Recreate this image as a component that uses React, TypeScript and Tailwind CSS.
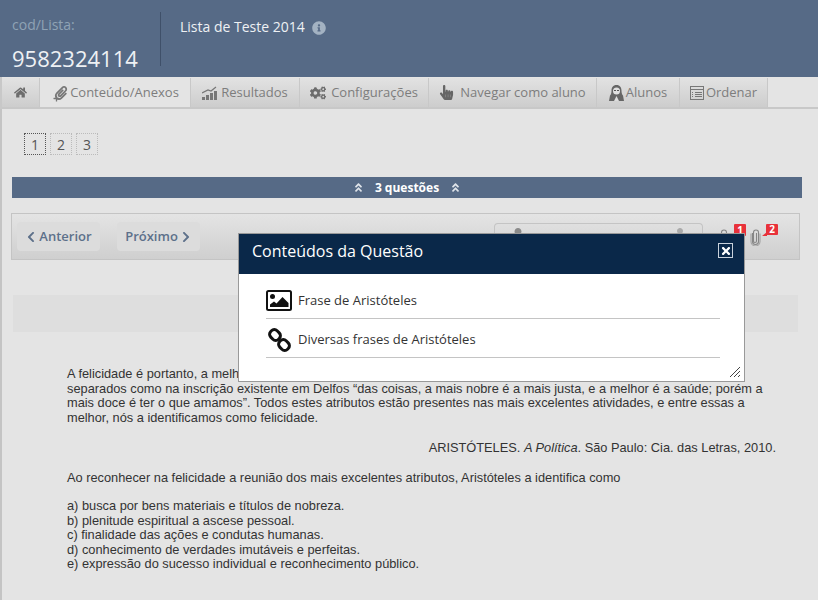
import { FaHome, FaPaperclip, FaCogs, FaHandPointer, FaChevronLeft, FaChevronRight, FaAngleDoubleUp, FaInfoCircle, FaPlus, FaTimes, FaUser } from 'react-icons/fa';

function Tab({ w, active, children }: { w: string; active?: boolean; children: React.ReactNode }) {
  return (
    <div className={`${w} h-[29px] flex items-center justify-center gap-[2px] border-r border-[#c8c8c8] text-[13px] text-[#7d7d7d] ${active ? 'bg-[#e4e4e4]' : 'bg-gradient-to-b from-[#e2e2e2] to-[#cdcdcd]'}`}>
      {children}
    </div>
  );
}

function Pager({ n, active }: { n: number; active?: boolean }) {
  return (
    <div className={`w-[22px] h-[22px] flex items-center justify-center text-[14px] text-[#555] border border-dotted ${active ? 'border-[#555]' : 'border-[#bbb]'}`}>
      {n}
    </div>
  );
}

function ChartIcon() {
  return (
    <svg width="17" height="14" viewBox="0 0 17 14" fill="#777">
      <rect x="0" y="11" width="3" height="3" />
      <rect x="4" y="9" width="3" height="5" />
      <rect x="8" y="7" width="3" height="7" />
      <rect x="12" y="5" width="3" height="9" />
      <path d="M0 7 6 4 9 5 14 1" fill="none" stroke="#777" strokeWidth="1.2" />
    </svg>
  );
}

function StudentIcon() {
  return (
    <svg width="15" height="16" viewBox="0 0 15 16">
      <path d="M7.5 0C4 0 2.5 2.500 2.500 5.500c0 2.500-.5 4-1.500 5L0 16h15l-1-5.500c-1-1-1.500-2.500-1.500-5C12.500 2.500 11 0 7.500 0z" fill="#666" />
      <ellipse cx="7.500" cy="6" rx="3.500" ry="3.500" fill="#e0e0e0" />
      <rect x="5" y="5" width="2" height="1" fill="#555" />
      <rect x="8" y="5" width="2" height="1" fill="#555" />
      <path d="M5 16 7.500 11 10 16z" fill="#dcdcdc" />
    </svg>
  );
}

function OrderIcon() {
  return (
    <svg width="14" height="14" viewBox="0 0 14 14" fill="none" stroke="#777" shapeRendering="crispEdges">
      <rect x="0.500" y="0.500" width="13" height="13" />
      <path d="M1 3.500H13M2 6.500H3M5 6.500H12M2 8.500H3M5 8.500H12M2 10.500H3M5 10.500H12" />
    </svg>
  );
}

function ClipIcon() {
  return (
    <svg width="11" height="17" viewBox="0 0 11 17" fill="none" stroke="#858585" strokeWidth="1.100">
      <path d="M2.500 4v8.500a3 3 0 0 0 6 0V3.500a2.500 2.500 0 0 0-5 0v8.500a1.500 1.500 0 0 0 3 0V4" />
      <path d="M1 4.500v8a4.500 4.500 0 0 0 9 0v-8" stroke="#a0a0a0" />
    </svg>
  );
}

function ImageIcon() {
  return (
    <svg width="26" height="21" viewBox="0 0 26 21">
      <rect x="1" y="1" width="24" height="19" rx="1.500" fill="#fff" stroke="#111" strokeWidth="2" />
      <circle cx="6.500" cy="6.500" r="2.500" fill="#111" />
      <path d="M4 17v-2.500l4-3 2.500 2 6-6.500 6 6v4z" fill="#111" />
    </svg>
  );
}

function ChainIcon() {
  return (
    <svg width="23" height="24" viewBox="0 0 23 24" fill="none" stroke="#111" strokeWidth="3">
      <rect x="1.500" y="2.500" width="11" height="9" rx="4" transform="rotate(45 7 7)" />
      <rect x="10.500" y="12.500" width="11" height="9" rx="4" transform="rotate(45 16 17)" />
    </svg>
  );
}

export default function App() {
  return (
    <div className="relative w-[818px] h-[600px] overflow-hidden bg-[#e4e4e4] font-['Open_Sans',sans-serif]">
      {/* cabecalho */}
      <div className="h-[77px] bg-[#566a86] flex">
        <div className="w-[161px] h-[54px] mt-3 border-r border-[#3f5069] pl-3">
          <div className="text-[14px] leading-[26px] text-[#8fa3b5]">cod/Lista:</div>
          <div className="text-[22px] leading-[30px] mt-[5px] text-[#eef1f4]">9582324114</div>
        </div>
        <div className="pl-[19px] pt-[17px] flex items-start gap-[7px] text-[14px] leading-5 text-[#eef1f4]">
          Lista de Teste 2014
          <FaInfoCircle className="text-[14px] mt-[4px] text-[#a3b2c2]" />
        </div>
      </div>

      {/* abas */}
      <div className="h-[32px] pt-px flex border-b-2 border-l-2 border-[#c8c8c8] bg-[#e4e4e4]">
        <Tab w="w-[38px]"><FaHome className="text-[13px] text-[#6d6d6d]" /></Tab>
        <Tab w="w-[151px]" active>
          <span className="relative ml-[3px]">
            <FaPaperclip className="text-[14px] text-[#777]" />
            <FaPlus className="absolute -bottom-[2px] -left-[1px] text-[7px] text-[#777]" />
          </span>
          Conteúdo/Anexos
        </Tab>
        <Tab w="w-[109px]"><ChartIcon />Resultados</Tab>
        <Tab w="w-[129px]"><FaCogs className="text-[16px] mr-[3px] text-[#6d6d6d]" />Configurações</Tab>
        <Tab w="w-[168px]"><FaHandPointer className="text-[15px] mr-[4px] text-[#666]" />Navegar como aluno</Tab>
        <Tab w="w-[83px]"><StudentIcon />Alunos</Tab>
        <Tab w="w-[88px]"><OrderIcon />Ordenar</Tab>
      </div>

      <div className="border-l-2 border-[#c4c4c4] h-[491px]">
        <div className="flex gap-1 pl-[22px] pt-6">
          <Pager n={1} active />
          <Pager n={2} />
          <Pager n={3} />
        </div>

        {/* barra de questoes */}
        <div className="ml-[10px] mr-4 mt-[22px] h-[21px] bg-[#566a86] flex items-center justify-center gap-[11px] text-[12px] font-bold text-white">
          <FaAngleDoubleUp className="text-[11px] text-[#dfe4ea]" />
          3 questões
          <FaAngleDoubleUp className="text-[11px] text-[#dfe4ea]" />
        </div>

        {/* navegacao */}
        <div className="ml-[9px] mr-[18px] mt-[15px] h-[47px] border border-[#c4c4c4] bg-gradient-to-b from-[#e4e4e4] to-[#cfcfcf] flex items-center pl-[5px] relative">
          <div className="w-[83px] h-[29px] rounded-[4px] bg-[#dcdcdc] flex items-center justify-center gap-[2px] text-[13px] font-semibold text-[#5d708a]">
            <FaChevronLeft className="text-[12px]" />Anterior
          </div>
          <div className="ml-[17px] w-[83px] h-[29px] rounded-[4px] bg-[#dcdcdc] flex items-center justify-center gap-[2px] text-[13px] font-semibold text-[#5d708a]">
            Próximo<FaChevronRight className="text-[12px]" />
          </div>
          <div className="ml-auto mr-[96px] mb-[2px] w-[209px] h-[26px] rounded-t-[4px] border border-b-0 border-[#c4c4c4] flex items-start justify-between pl-[16px] pr-[16px] pt-[4px]">
            <FaUser className="text-[14px] text-[#8a8a8a]" />
            <FaUser className="text-[12px] text-[#aaa]" />
          </div>
          <div className="absolute left-[706px] top-[15px]"><ClipIcon /></div>
          <div className="absolute left-[722px] top-[10px] w-[12px] h-[12px] rounded-[1px] bg-[#e8313a] flex items-center justify-center text-[10px] font-bold text-white">1</div>
          <div className="absolute left-[738px] top-[15px]"><ClipIcon /></div>
          <svg className="absolute left-[750px] top-[18px]" width="5" height="4" viewBox="0 0 5 4" fill="#e8313a"><path d="M5 0V4H0z" /></svg>
          <div className="absolute left-[754px] top-[10px] w-[12px] h-[11px] rounded-[1px] bg-[#e8313a] flex items-center justify-center text-[10px] font-bold text-white">2</div>
        </div>

        {/* faixa */}
        <div className="ml-[11px] mr-[20px] mt-[35px] h-[37px] bg-[#dedede]" />

        {/* questao */}
        <div className="ml-[65px] mr-[42px] mt-[35px] font-['Liberation_Sans',sans-serif] text-[12.8px] leading-[14.5px] text-[#333]">
          <p>A felicidade é portanto, a melhor, a mais nobre e a mais aprazível coisa do mundo, e esses atributos não devem estar</p>
          <p>separados como na inscrição existente em Delfos “das coisas, a mais nobre é a mais justa, e a melhor é a saúde; porém a</p>
          <p>mais doce é ter o que amamos”. Todos estes atributos estão presentes nas mais excelentes atividades, e entre essas a</p>
          <p>melhor, nós a identificamos como felicidade.</p>
          <p className="mt-[16px] text-right">ARISTÓTELES. <em>A Política</em>. São Paulo: Cia. das Letras, 2010.</p>
          <p className="mt-[15px]">Ao reconhecer na felicidade a reunião dos mais excelentes atributos, Aristóteles a identifica como</p>
          <p className="mt-[14px]">a) busca por bens materiais e títulos de nobreza.</p>
          <p>b) plenitude espiritual a ascese pessoal.</p>
          <p>c) finalidade das ações e condutas humanas.</p>
          <p>d) conhecimento de verdades imutáveis e perfeitas.</p>
          <p>e) expressão do sucesso individual e reconhecimento público.</p>
        </div>
      </div>

      {/* modal */}
      <div className="absolute left-[238px] top-[233px] w-[507px] h-[149px] border border-[#999] bg-white">
        <div className="h-[40px] bg-[#0a2849] flex items-start justify-between pl-[13px] pr-[11px] pt-[6px] text-[16px] leading-[22px] text-white">
          Conteúdos da Questão
          <div className="mt-[3px] w-[15px] h-[15px] border border-[#c9d2dc] flex items-center justify-center">
            <FaTimes className="text-[12px] text-white" />
          </div>
        </div>
        <div className="pl-[27px] pr-[24px] text-[13px] text-[#333]">
          <div className="h-[45px] pt-[9px] border-b border-[#c4c4c4] flex items-center gap-[6px]">
            <ImageIcon />
            Frase de Aristóteles
          </div>
          <div className="h-[39px] pt-1 pl-[2px] border-b border-[#c4c4c4] flex items-center gap-[7px]">
            <ChainIcon />
            Diversas frases de Aristóteles
          </div>
        </div>
        <svg className="absolute right-[3px] bottom-[3px]" width="12" height="12" viewBox="0 0 12 12" stroke="#444" strokeWidth="1" shapeRendering="crispEdges">
          <path d="M1 11 11 1M5 11 11 5M9 11 11 9" />
        </svg>
      </div>
    </div>
  );
}
